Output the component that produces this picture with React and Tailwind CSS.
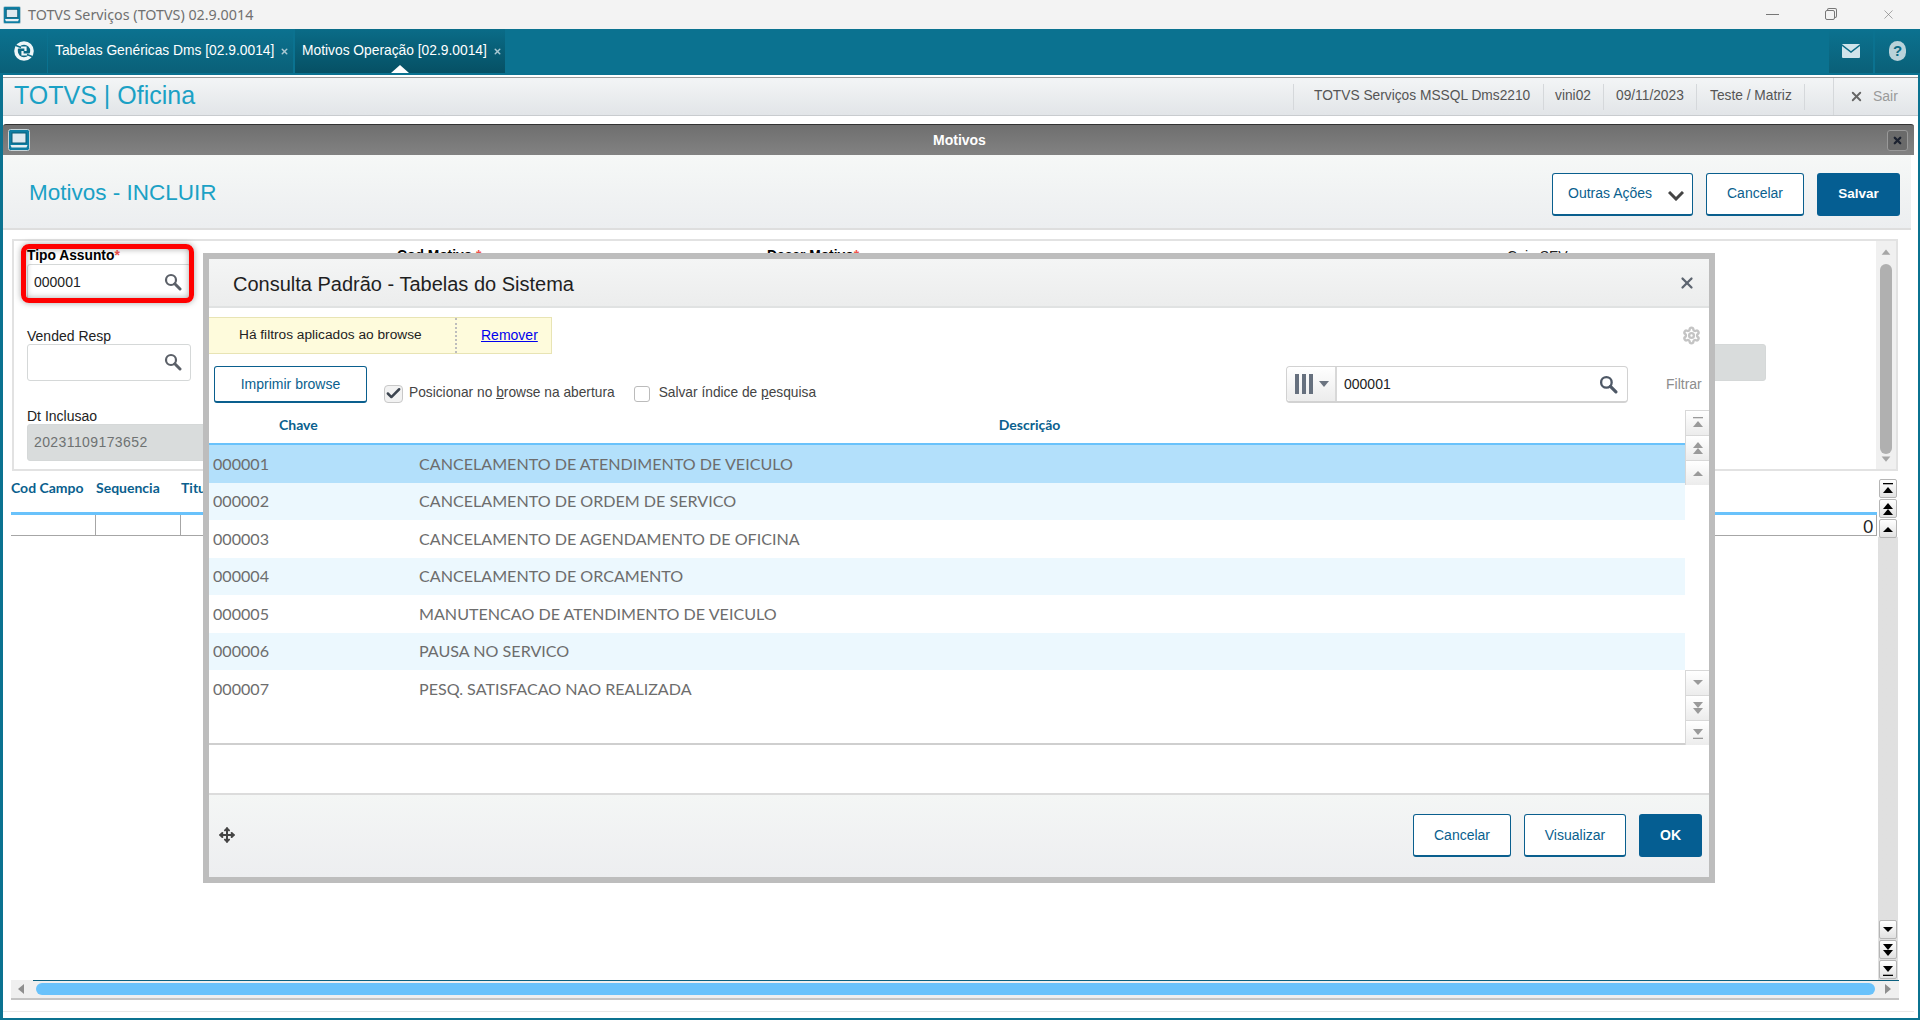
import React from 'react';
import { X, Settings, Move, Check } from 'lucide-react';

const Monitor = ({ className }) => (
  <svg viewBox="0 0 22 22" className={className}>
    <rect x="0.5" y="0.5" width="21" height="21" rx="2" fill="#0f7ea3" stroke="#c8d4d8" />
    <rect x="4" y="4" width="14" height="10" fill="#dfeaf0" stroke="#0a5d78" />
    <path d="M2.5 16h17l-1 2.5h-15z" fill="#e8f0f3" />
  </svg>
);

const Mag = ({ color = '#5b6068', className = 'w-[18px] h-[18px]' }) => (
  <svg viewBox="0 0 18 18" className={className}>
    <circle cx="7" cy="7" r="5" fill="none" stroke={color} strokeWidth="2.2" />
    <path d="M10.8 10.8L16 16" stroke={color} strokeWidth="3" strokeLinecap="round" />
  </svg>
);

const Tri = ({ kind, down, color }) => (
  <svg viewBox="0 0 14 14" className={'w-[14px] h-[14px] ' + (down ? 'rotate-180' : '')}>
    {kind === 'end' && <rect x="2" y="1" width="10" height="1.3" fill={color} />}
    {kind === 'end' && <polygon points="2,11 7,5 12,11" fill={color} />}
    {kind === 'double' && <polygon points="2,7 7,1 12,7" fill={color} />}
    {kind === 'double' && <polygon points="2,13 7,7 12,13" fill={color} />}
    {kind === 'single' && <polygon points="2,10 7,5 12,10" fill={color} />}
  </svg>
);

const Caret = ({ left, right, down, up, className = '', color = '#8e8e8e' }) => (
  <svg viewBox="0 0 12 12" className={'w-[12px] h-[12px] ' + className}>
    {up && <polygon points="1,9 6,3 11,9" fill={color} />}
    {down && <polygon points="1,3 6,9 11,3" fill={color} />}
    {left && <polygon points="9,1 3,6 9,11" fill={color} />}
    {right && <polygon points="3,1 9,6 3,11" fill={color} />}
  </svg>
);

const OutBtn = ({ children, className = '' }) => (
  <button className={'h-[43px] bg-white border border-[#0a5f8e] border-b-2 rounded-[3px] text-[#0a5f8e] text-[14px] flex items-center justify-center ' + className}>
    {children}
  </button>
);

const Field = ({ label, req, bold, disabled, value, mag, className = '' }) => (
  <div className={'h-[53px] flex flex-col ' + className}>
    <div className={'h-[16px] leading-[16px] text-[#222] whitespace-nowrap ' + (bold ? 'font-bold text-black text-[13.8px]' : 'text-[14px]')}>
      {label}
      {req && <span className="text-[#f0504a]">*</span>}
    </div>
    {value !== undefined && (
      <div className={'h-[37px] border border-[#d5d8d8] rounded-[3px] px-[6px] flex items-center justify-between ' + (disabled ? 'bg-[#d9dcdc] text-[#6e7272] text-[14px] tracking-[0.4px]' : 'bg-white text-[#222] text-[14px]')}>
        <span>{value}</span>
        {mag && <Mag className="w-[18px] h-[18px] mr-[2px] mt-[-1px]" />}
      </div>
    )}
  </div>
);

const rows = [
  ['000001', 'CANCELAMENTO DE ATENDIMENTO DE VEICULO', 'bg-[#b3e0fb]'],
  ['000002', 'CANCELAMENTO DE ORDEM DE SERVICO', 'bg-[#ecf8fe]'],
  ['000003', 'CANCELAMENTO DE AGENDAMENTO DE OFICINA', 'bg-white'],
  ['000004', 'CANCELAMENTO DE ORCAMENTO', 'bg-[#ecf8fe]'],
  ['000005', 'MANUTENCAO DE ATENDIMENTO DE VEICULO', 'bg-white'],
  ['000006', 'PAUSA NO SERVICO', 'bg-[#ecf8fe]'],
  ['000007', 'PESQ. SATISFACAO NAO REALIZADA', 'bg-white'],
];

const GridBtn = ({ kind, down }) => (
  <div className="h-[25px] w-[24px] border-t border-l border-[#d8d8d8] bg-linear-to-b from-white to-[#ececec] flex items-center justify-center">
    <Tri kind={kind} down={down} color="#9a9a9a" />
  </div>
);

const SideBtn = ({ kind, down }) => (
  <div className="h-[19px] w-[18px] mb-px border border-[#b5b5b5] rounded-[2px] bg-linear-to-b from-white to-[#e2e2e2] flex items-center justify-center">
    <Tri kind={kind} down={down} color="#000" />
  </div>
);

function Modal() {
  return (
    <div className="absolute left-[203px] top-[253px] w-[1512px] h-[630px] border-[6px] border-[#bdbdbd] bg-white flex flex-col">
      <div className="h-[49px] shrink-0 border-b-2 border-[#e0e2e2] bg-linear-to-b from-[#f4f5f5] to-[#eceded] flex items-center justify-between pl-[24px] pr-[13px]">
        <span className="text-[20px] text-[#1f1f1f] mt-[2px]">Consulta Padrão - Tabelas do Sistema</span>
        <X className="w-[18px] h-[18px] text-[#5d6570]" strokeWidth={3} />
      </div>
      <div className="h-[37px] mt-[9px] shrink-0 flex items-center justify-between pr-[8px]">
        <div className="w-[343px] h-full bg-[#fefbdc] border border-l-0 border-[#e8e4b4] flex items-center text-[13.7px] text-[#222]">
          <span className="w-[248px] pl-[30px] border-r-2 border-dotted border-[#bdbdbd] h-full flex items-center whitespace-nowrap">Há filtros aplicados ao browse</span>
          <a className="ml-[24px] text-[14px] text-[#0000ee] underline">Remover</a>
        </div>
        <Settings className="w-[19px] h-[19px] text-[#c4c4c4]" strokeWidth={3} />
      </div>
      <div className="h-[37px] mt-[12px] shrink-0 flex items-center pl-[5px] text-[13.75px] text-[#444] whitespace-nowrap">
        <button className="w-[153px] h-[37px] bg-white border border-[#0a5f8e] border-b-2 rounded-[3px] text-[#0a5f8e] text-[14px]">Imprimir browse</button>
        <span className="ml-[17px] mt-[18px] w-[19px] h-[18px] border border-[#c8c8c8] rounded-[4px] bg-[#f2f2f2] flex items-center justify-center">
          <Check className="w-[17px] h-[17px] text-[#3d4550]" strokeWidth={3.5} />
        </span>
        <span className="ml-[6px] mt-[18px]">Posicionar no <u>b</u>rowse na abertura</span>
        <span className="ml-[19px] mt-[18px] w-[16px] h-[16px] border border-[#bbb] rounded-[3px] bg-white" />
        <span className="ml-[9px] mt-[18px]">Salvar índice de <u>p</u>esquisa</span>
        <div className="ml-auto w-[342px] h-[37px] border border-[#d2d2d2] border-b-2 rounded-[4px] flex items-center bg-white text-[14px]">
          <div className="w-[50px] h-full shrink-0 rounded-l-[4px] border-r-2 border-[#d8d8d8] bg-linear-to-b from-white to-[#ececec] flex items-center pl-[8px] gap-[3px]">
            <span className="w-[4px] h-[20px] bg-[#66707e]" />
            <span className="w-[4px] h-[20px] bg-[#66707e]" />
            <span className="w-[4px] h-[20px] bg-[#66707e]" />
            <Caret down className="ml-[2px]" color="#6b7480" />
          </div>
          <span className="ml-[7px] flex-1 text-[#222]">000001</span>
          <Mag className="w-[19px] h-[19px] mr-[9px]" color="#4e5866" />
        </div>
        <span className="ml-[38px] mr-[9px] w-[34px] text-[14px] text-[#8d8d8d]">Filtrar</span>
      </div>
      <div className="h-[342px] shrink-0 flex font-['Lato',sans-serif]">
        <div className="w-[1476px] border-b-2 border-[#cfcfcf] flex flex-col">
          <div className="h-[40px] shrink-0 flex items-center text-[14px] font-bold text-[#0a5f8e] pt-[3px]">
            <span className="ml-[70px]">Chave</span>
            <span className="ml-[681px]">Descrição</span>
          </div>
          <div className="h-[2px] shrink-0 bg-[#69c2fb]" />
          {rows.map((r) => (
            <div key={r[0]} className={'h-[37.5px] shrink-0 flex items-center text-[16.1px] text-[#6d6d6d] ' + r[2]}>
              <span className="w-[210px] pl-[4px] shrink-0">{r[0]}</span>
              <span>{r[1]}</span>
            </div>
          ))}
        </div>
        <div className="w-[24px] pt-[7px] flex flex-col justify-between">
          <div>
            <GridBtn kind="end" />
            <GridBtn kind="double" />
            <GridBtn kind="single" />
          </div>
          <div>
            <GridBtn kind="single" down />
            <GridBtn kind="double" down />
            <GridBtn kind="end" down />
          </div>
        </div>
      </div>
      <div className="h-[48px] shrink-0" />
      <div className="flex-1 border-t-2 border-[#dcdcdc] bg-linear-to-b from-[#f4f6f5] to-[#edeef0] flex items-center pl-[10px] pr-[7px] gap-[13px]">
        <Move className="w-[16px] h-[16px] text-[#444] mr-auto mt-[-2px]" strokeWidth={3} />
        <OutBtn className="w-[98px] mt-[-1px]">Cancelar</OutBtn>
        <OutBtn className="w-[102px] mt-[-1px]">Visualizar</OutBtn>
        <button className="w-[63px] h-[43px] mt-[-1px] bg-[#055e92] rounded-[3px] text-white font-bold text-[14px]">OK</button>
      </div>
    </div>
  );
}

export default function App() {
  return (
    <div className="relative w-[1920px] h-[1020px] overflow-hidden bg-white font-['Liberation_Sans',Arial,sans-serif]">
      {/* Windows title bar */}
      <div className="h-[29px] bg-[#f3f3f3] flex items-center pl-[3px]">
        <Monitor className="w-[18px] h-[18px]" />
        <span className="ml-[7px] text-[14.3px] text-[#707070] font-['Noto_Sans',sans-serif]">TOTVS Serviços (TOTVS) 02.9.0014</span>
        <div className="ml-auto flex items-center pr-[24px] gap-[46px] text-[#777]">
          <span className="w-[13px] h-px bg-[#777]" />
          <span className="relative w-[10px] h-[10px] border border-[#777] rounded-[2px] bg-[#f3f3f3] shadow-[2px_-2px_0_-1px_#f3f3f3,2px_-2px_0_0_#777]" />
          <X className="w-[15px] h-[15px]" strokeWidth={1} />
        </div>
      </div>

      {/* App tab bar */}
      <div className="h-[46px] bg-[#0b7290] flex text-white text-[13.8px]">
        <div className="w-[47px] h-[44px] bg-linear-to-b from-[#0b7290] to-[#0a6078] flex items-center justify-center">
          <svg viewBox="0 0 22 22" className="w-[22px] h-[22px]">
            <circle cx="11" cy="11" r="8" fill="none" stroke="#eef6f8" strokeWidth="3.6" />
            <path d="M4 7.5h8.5v3.5" fill="none" stroke="#eef6f8" strokeWidth="2.2" />
            <path d="M18 14.5H9.5V11" fill="none" stroke="#eef6f8" strokeWidth="2.2" />
            <path d="M3 5.5l5 2" stroke="#0a6a85" strokeWidth="1.4" />
            <path d="M19 16.5l-5-2" stroke="#0a6a85" strokeWidth="1.4" />
          </svg>
        </div>
        <div className="ml-px w-[245px] h-[44px] bg-linear-to-b from-[#0b7290] to-[#0a6078] flex items-center pl-[7px] gap-[6px]">
          <span>Tabelas Genéricas Dms [02.9.0014]</span>
          <X className="w-[9px] h-[9px] text-[#a9c8d2]" strokeWidth={4} />
        </div>
        <div className="relative ml-[2px] w-[210px] h-[44px] bg-linear-to-b from-[#0a6c88] to-[#065064] flex items-center pl-[7px] gap-[6px]">
          <span>Motivos Operação [02.9.0014]</span>
          <X className="w-[9px] h-[9px] text-[#a9c8d2]" strokeWidth={4} />
          <span className="absolute left-[96px] bottom-0 w-0 h-0 border-x-[9px] border-x-transparent border-b-[8px] border-b-white" />
        </div>
        <div className="ml-auto flex">
          <div className="w-[44px] h-[44px] bg-linear-to-b from-[#0b7290] to-[#0a6078] flex items-center justify-center">
            <svg viewBox="0 0 18 14" className="w-[18px] h-[14px]">
              <rect width="18" height="14" rx="1" fill="#cfe3ea" />
              <path d="M0 1l9 7 9-7" fill="none" stroke="#0a6a85" strokeWidth="1.4" />
            </svg>
          </div>
          <div className="ml-[2px] w-[45px] h-[44px] bg-linear-to-b from-[#0b7290] to-[#0a6078] flex items-center justify-center">
            <span className="w-[17px] h-[20px] rounded-full bg-[#b9d2da] text-[#0a6a85] font-bold text-[15px] flex items-center justify-center">?</span>
          </div>
        </div>
      </div>

      {/* Everything inside the teal frame */}
      <div className="h-[945px] border-l-[3px] border-r-[2px] border-b-[2px] border-[#0b7290] flex flex-col">
        <div className="h-[2px] shrink-0 bg-white" />
        <div className="h-[39px] shrink-0 border-t border-[#9a9a9a] border-b border-b-[#c9cccf] bg-linear-to-b from-[#f3f5f6] to-[#e2e5e8] flex items-center text-[13.75px] text-[#555] whitespace-nowrap">
          <span className="ml-[11px] mt-[-2px] text-[25px] text-[#1ba1c5]">TOTVS | Oficina</span>
          <div className="ml-auto h-[26px] flex items-center">
            <span className="w-[250px] h-full border-l border-[#d5d8db] pl-[20px] flex items-center">TOTVS Serviços MSSQL Dms2210</span>
            <span className="w-[60px] h-full border-l border-[#d5d8db] pl-[11px] flex items-center">vini02</span>
            <span className="w-[93px] h-full border-l border-[#d5d8db] pl-[12px] flex items-center">09/11/2023</span>
            <span className="w-[109px] h-full border-l border-r border-[#d5d8db] pl-[13px] flex items-center">Teste / Matriz</span>
            <span className="w-[28px]" />
            <span className="w-[85px] h-[37px] border-l border-[#d5d8db] pl-[15px] flex items-center gap-[9px] text-[14px] text-[#9a9a9a]">
              <X className="w-[15px] h-[15px] text-[#666]" strokeWidth={3} />
              Sair
            </span>
          </div>
        </div>
        <div className="h-[8px] shrink-0" />

        {/* Motivos window */}
        <div className="h-[888px] w-[1911px] shrink-0 flex flex-col border-b border-[#e8e8e8]">
          <div className="h-[31px] shrink-0 rounded-t-[3px] border-t border-[#333] bg-linear-to-b from-[#6f6f6f] to-[#828282] flex items-center justify-between pl-[5px] pr-[6px] relative">
            <Monitor className="w-[22px] h-[22px]" />
            <span className="absolute left-[930px] text-[14px] font-bold text-white">Motivos</span>
            <span className="w-[21px] h-[21px] rounded-[3px] border border-[#999] bg-[#6a6a6a] flex items-center justify-center">
              <X className="w-[11px] h-[11px] text-[#1c2230]" strokeWidth={5} />
            </span>
          </div>
          <div className="h-[75px] w-[1908px] shrink-0 border-b-2 border-[#dedede] bg-linear-to-b from-[#f6f8f7] to-[#eceef0] flex items-center pl-[26px] pr-[11px]">
            <span className="text-[22.5px] text-[#1ba1c5] mt-[3px]">Motivos - INCLUIR</span>
            <div className="ml-auto flex gap-[13px] mt-[5px]">
              <OutBtn className="w-[141px] relative justify-start pl-[15px] text-[13.8px]">
                Outras Ações
                <svg viewBox="0 0 16 10" className="absolute right-[8px] top-[17px] w-[16px] h-[10px]">
                  <path d="M1 1l7 7 7-7" fill="none" stroke="#444" strokeWidth="3" />
                </svg>
              </OutBtn>
              <OutBtn className="w-[98px]">Cancelar</OutBtn>
              <button className="w-[83px] h-[43px] bg-[#055e92] rounded-[3px] text-white font-bold text-[13.5px]">Salvar</button>
            </div>
          </div>

          {/* Form panel */}
          <div className="h-[232px] w-[1886px] ml-[9px] mt-[9px] shrink-0 border-2 border-[#e2e2e2] flex">
            <div className="flex-1 pt-[7px] pl-[13px] grid grid-cols-[370px_370px_740px_300px] gap-y-[27px] content-start">
              <Field label="Tipo Assunto" req bold value="000001" mag className="w-[164px]" />
              <Field label="Cod Motivo " req bold />
              <Field label="Descr Motivo" req bold />
              <Field label="Cpia SEV" />
              <Field label="Vended Resp" value="" mag className="w-[164px]" />
              <div />
              <div />
              <Field label="" value="" disabled className="w-[259px]" />
              <Field label="Dt Inclusao" value="20231109173652" disabled className="w-[300px]" />
            </div>
            <div className="w-[20px] bg-[#f0f0f0] flex flex-col items-center">
              <Caret up className="mt-[6px]" color="#a6a6a6" />
              <div className="w-[12px] h-[217px] mt-[7px] rounded-[6px] bg-[#b0b0b0]" />
              <Caret down className="mt-auto mb-[5px]" color="#a6a6a6" />
            </div>
          </div>

          {/* Detail grid */}
          <div className="h-[509px] shrink-0 ml-[8px] flex">
            <div className="w-[1866px] text-[14px] font-['Lato',sans-serif]">
              <div className="h-[41px] flex items-center font-bold text-[#0a5f8e] pb-[8px]">
                <span className="w-[85px]">Cod Campo</span>
                <span className="w-[85px]">Sequencia</span>
                <span>Titulo</span>
              </div>
              <div className="h-[3px] bg-[#69c2fb]" />
              <div className="h-[21px] border-b border-r border-[#a6a6a6] flex">
                <div className="w-[85px] border-r border-[#a6a6a6]" />
                <div className="w-[85px] border-r border-[#a6a6a6]" />
                <div className="ml-auto pr-[3px] text-[17px] leading-[24px] text-[#222]">0</div>
              </div>
            </div>
            <div className="w-[20px] ml-px pt-[8px] flex flex-col items-center bg-linear-to-b from-white from-[66px] to-[#e0e0e0] to-[66px]">
              <SideBtn kind="end" />
              <SideBtn kind="double" />
              <SideBtn kind="single" />
              <div className="flex-1" />
              <SideBtn kind="single" down />
              <SideBtn kind="double" down />
              <SideBtn kind="end" down />
            </div>
          </div>

          {/* Horizontal scrollbar */}
          <div className="h-[20px] w-[1888px] ml-[8px] shrink-0 bg-[#efefef] border-b-2 border-[#c4c4c4] flex items-center relative">
            <div className="absolute left-[22px] right-0 top-0 h-px bg-[#0a5f7e]" />
            <Caret left className="ml-[4px]" color="#8e8e8e" />
            <div className="ml-[9px] w-[1839px] h-[12px] rounded-[6px] bg-[#69c2fb]" />
            <Caret right className="ml-[7px]" color="#8e8e8e" />
          </div>
        </div>
      </div>

      {/* Red annotation around the first field */}
      <div className="absolute left-[21px] top-[244px] w-[173px] h-[59px] border-[5px] border-[#f00] rounded-[8px] shadow-[0_0_6px_rgba(0,0,0,0.35),inset_0_0_6px_rgba(0,0,0,0.35)]" />

      <Modal />
    </div>
  );
}
